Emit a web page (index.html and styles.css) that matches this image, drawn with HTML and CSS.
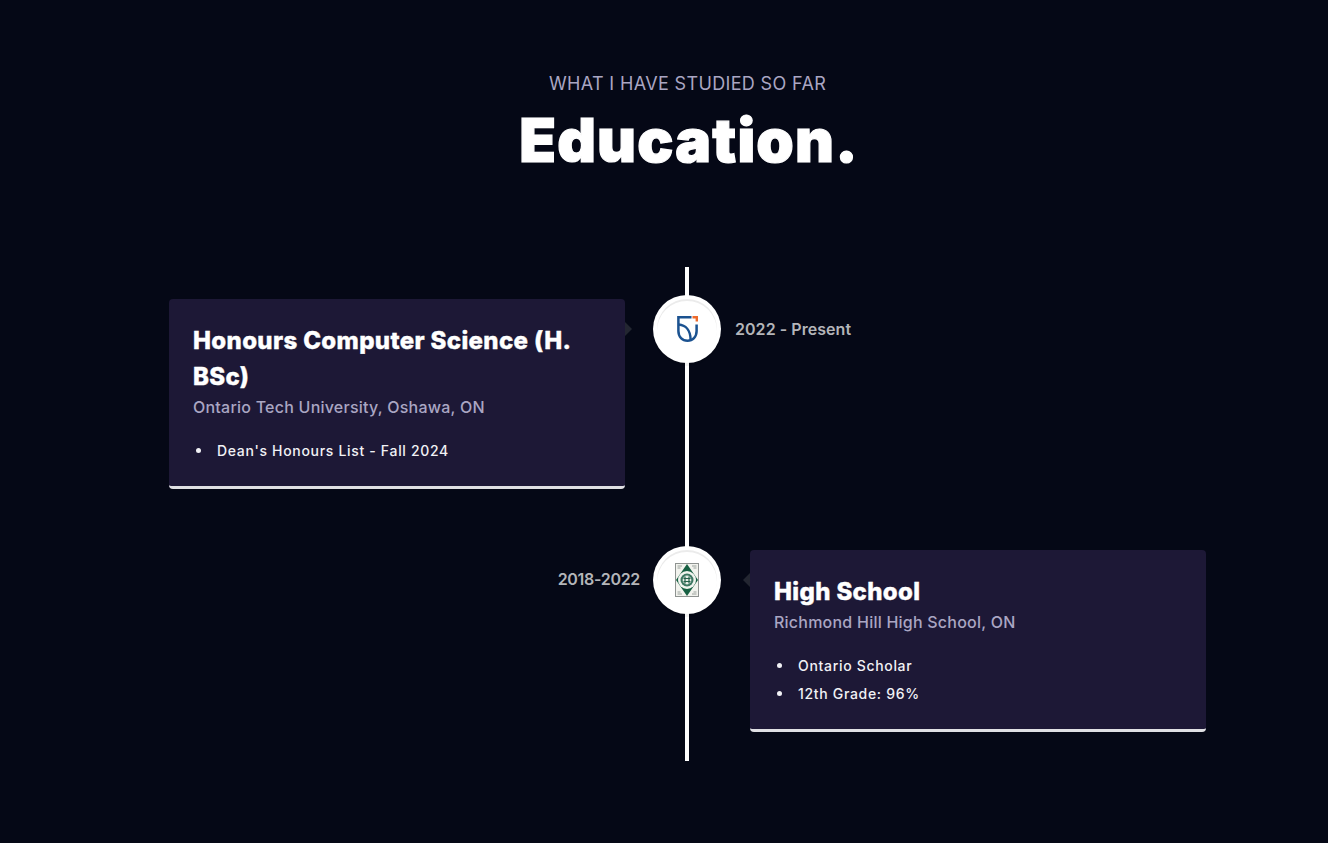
FILE: index.html
```html
<!DOCTYPE html>
<html lang="en">
<head>
<meta charset="utf-8">
<title>Education</title>
<link rel="stylesheet" href="styles.css">
</head>
<body>
<main class="section">
  <header class="intro">
    <p class="eyebrow">What I have studied so far</p>
    <h2 class="hero">Education.</h2>
  </header>
  <div class="timeline">
    <div class="row">
      <div class="side side-left">
        <article class="card card-left">
          <h3 class="card-title">Honours Computer Science (H. BSc)</h3>
          <p class="card-sub">Ontario Tech University, Oshawa, ON</p>
          <ul class="card-list"><li>Dean's Honours List - Fall 2024</li></ul>
        </article>
      </div>
      <div class="icon">
        <svg class="logo" viewBox="0 0 21 26" width="21" height="26">
          <path d="M14.5 1.3H1.4V15C1.4 21 5.3 24.7 10.5 24.7C15.7 24.7 19.6 21 19.6 15V8.5" fill="none" stroke="#1b5290" stroke-width="2.5"/>
          <path d="M1.6 8.5C8.5 9 13.6 14 13.6 24" fill="none" stroke="#1b5290" stroke-width="2.5"/>
          <path d="M15.5 0H21V5.5H18.6V2.4H15.5Z" fill="#ee6a2c"/>
        </svg>
      </div>
      <div class="side side-right"><span class="date date-right">2022 - Present</span></div>
    </div>
    <div class="row">
      <div class="side side-left"><span class="date date-left">2018-2022</span></div>
      <div class="icon">
        <svg class="logo" viewBox="0 0 24 34" width="24" height="34">
          <rect x=".5" y=".5" width="23" height="33" fill="#f2f3ee" stroke="#8f9391"/>
          <path d="M2.5 3H7M2.5 5H5.5M17 3H21.5M18.5 5H21.5M2.5 29H5.5M2.5 31H7M18.5 29H21.5M17 31H21.5" stroke="#9aa19c" stroke-width="1"/>
          <path d="M12 1L23 17L12 33L1 17Z" fill="#176043"/>
          <circle cx="12" cy="17" r="9" fill="#f1f4ef"/>
          <circle cx="12" cy="17" r="6.5" fill="#3d7762"/>
          <circle cx="12" cy="17" r="4.4" fill="#e5ece6"/>
          <path d="M8.5 15.5H15.5M8.5 18.5H15.5M10 13.5V20.5M14 13.5V20.5" stroke="#24604a" stroke-width="1.2"/>
        </svg>
      </div>
      <div class="side side-right">
        <article class="card card-right">
          <h3 class="card-title">High School</h3>
          <p class="card-sub">Richmond Hill High School, ON</p>
          <ul class="card-list"><li>Ontario Scholar</li><li>12th Grade: 96%</li></ul>
        </article>
      </div>
    </div>
  </div>
</main>
</body>
</html>
```
FILE: styles.css
```css
* { box-sizing: border-box; }
html, body { margin: 0; padding: 0; }
body { background: #050816; color: #fff; font-family: Inter, "Liberation Sans", sans-serif; height: 843px; overflow: hidden; }
.section { padding: 71px 122px 0 169px; }
.intro { text-align: center; }
.eyebrow { margin: 0; font-size: 18px; line-height: 26px; font-weight: 400; letter-spacing: 0.35px; text-transform: uppercase; color: #aaa6c3; }
.hero { margin: 10px 0 0; font-size: 60px; line-height: 66px; font-weight: 900; letter-spacing: 1.2px; text-indent: 3px; -webkit-text-stroke: 1.2px #fff; color: #fff; }
.timeline { position: relative; margin-top: 94px; padding: 28px 0 29.5px; display: flex; flex-direction: column; gap: 57px; }
.timeline::before { content: ""; position: absolute; top: 0; bottom: 0; left: 516px; width: 4px; background: #fff; }
.row { display: grid; grid-template-columns: 484px 68px 485px; align-items: start; }
.side { display: flex; }
.side-left { justify-content: flex-end; }
.icon { position: relative; margin: 4px; width: 60px; height: 60px; border-radius: 50%; background: #fff; display: flex; align-items: center; justify-content: center; box-shadow: 0 0 0 4px #fff, inset 0 2px 0 rgba(0,0,0,.08), 0 3px 0 4px rgba(0,0,0,.05); }
.card { position: relative; width: 456px; margin-top: 4px; padding: 24px 24px 17px; background: #1d1836; border-bottom: 3px solid #e0e0e4; border-radius: 4px; }
.card-left { margin-right: 28px; }
.card-right { margin-left: 29px; }
.card::before { content: ""; position: absolute; top: 23px; border: 7px solid transparent; }
.card-left::before { left: 100%; border-left-color: #232631; }
.card-right::before { right: 100%; border-right-color: #232631; }
.card-title { margin: 0; font-size: 24px; line-height: 36px; font-weight: 800; letter-spacing: .36px; -webkit-text-stroke: .4px #fff; color: #fff; }
.card-sub { margin: 0; font-size: 16px; line-height: 24px; font-weight: 500; letter-spacing: .23px; color: #aaa6c3; }
.card-list { margin: 21px 0 0; padding: 0; list-style: none; font-size: 14px; line-height: 21px; font-weight: 500; letter-spacing: .68px; color: #f1f1f5; }
.card-list li { display: flex; align-items: center; gap: 16px; margin: 0 0 7.5px; }
.card-list li::before { content: ""; width: 5px; height: 5px; margin-left: 3px; border-radius: 50%; background: #f1f1f5; }
.date { font-size: 16px; line-height: 24px; font-weight: 600; letter-spacing: .05px; color: #b4b5b9; margin-top: 21.5px; }
.date-right { margin-left: 14px; }
.date-left { margin-right: 13px; letter-spacing: -.3px; }
```
